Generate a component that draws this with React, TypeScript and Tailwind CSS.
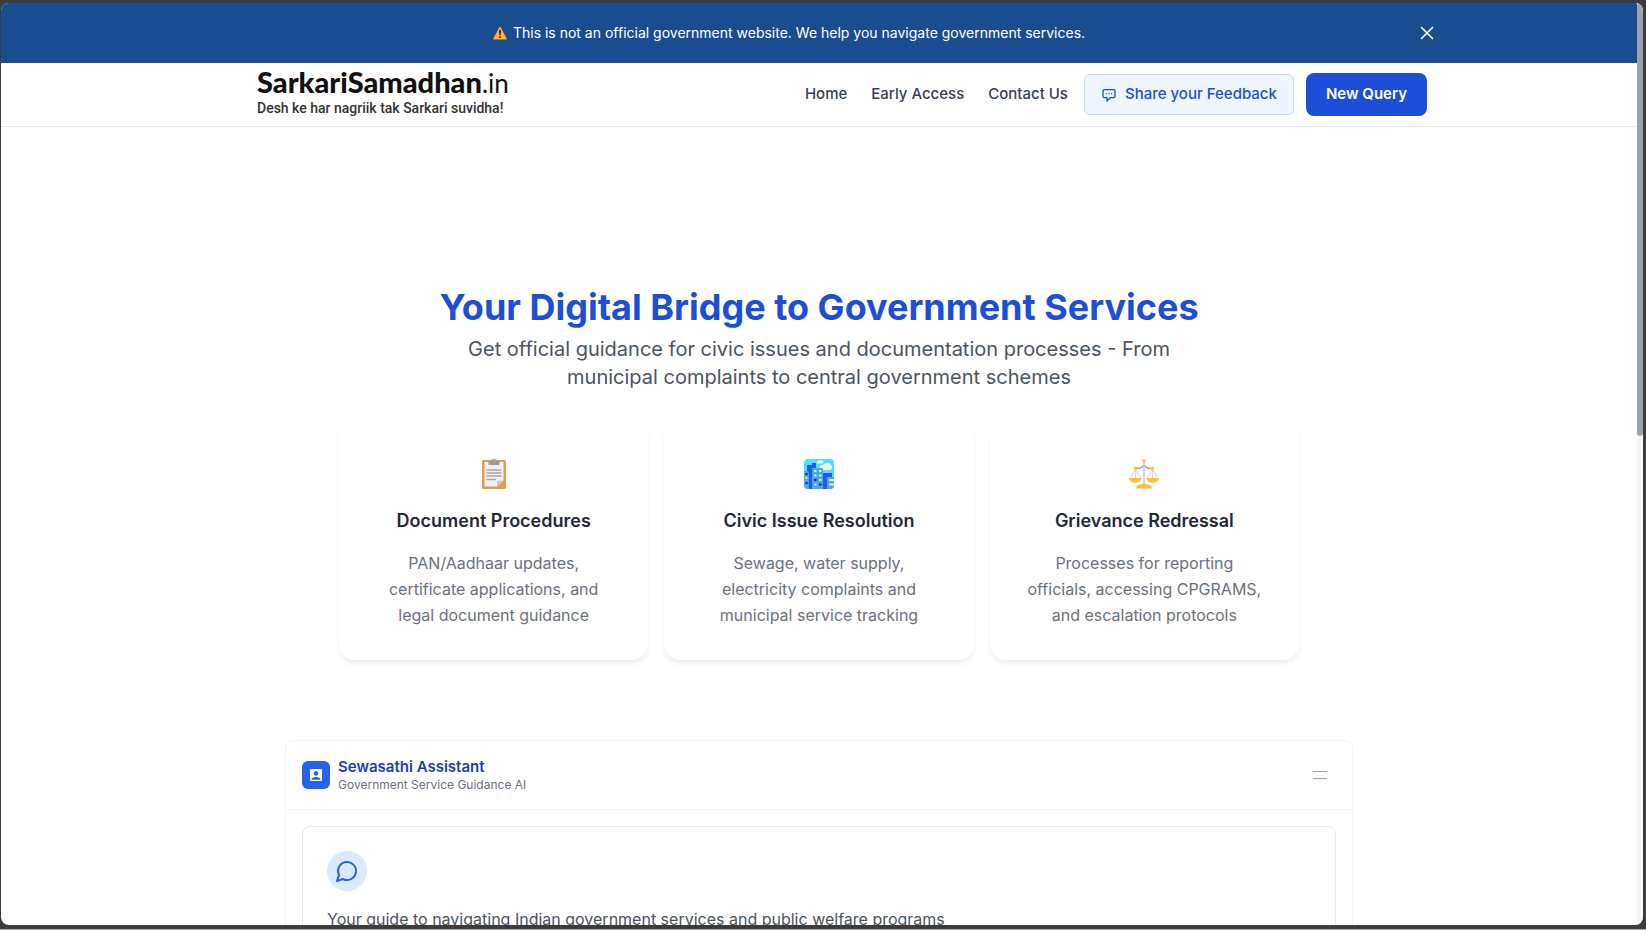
import { useState } from 'react';
import { HiOutlineChatAlt } from 'react-icons/hi';
import { MdAccountBox } from 'react-icons/md';

const WarningIcon = () => (
  <svg viewBox="0 0 32 32" className="size-3.5" aria-hidden="true">
    <path d="M14.4 2.600 1 28A2 2 0 0 0 2.700 31h26.600a2 2 0 0 0 1.700-3L17.600 2.600a1.800 1.800 0 0 0-3.200 0Z" fill="#ffb02e" />
    <path d="M13.800 11a2.200 2.200 0 0 1 4.400 0l-.7 9a1.500 1.500 0 0 1-3 0Z" fill="#321b41" />
    <circle cx="16" cy="25.500" r="2.200" fill="#321b41" />
  </svg>
);

const ClipboardIcon = () => (
  <svg viewBox="0 0 32 32" className="size-8" aria-hidden="true">
    <rect x="4" y="2" width="24" height="29" rx="1.6" fill="#e39d47" />
    <path d="M6.5 4h19v18.5L19 28.5H6.5Z" fill="#f3eef8" />
    <path d="M19 28.5v-5a1 1 0 0 1 1-1h5.5Z" fill="#cdc4d6" />
    <path d="M13 2.5a3 1.500 0 0 1 6 0h1a1.500 1.500 0 0 1 1.500 1.500v3h-11V4A1.500 1.500 0 0 1 12 2.500Z" fill="#9b9b9b" />
    <circle cx="16" cy="3" r="1" fill="#e39d47" />
    <path d="M8.5 12h15M8.5 15h15M8.5 18h15M8.5 21.5H18" stroke="#a6a6a6" strokeWidth="1.3" />
  </svg>
);

const CityIcon = () => (
  <svg viewBox="0 0 32 32" className="size-8" aria-hidden="true">
    <clipPath id="city">
      <rect x="1" y="1" width="30" height="30" rx="4" />
    </clipPath>
    <g clipPath="url(#city)">
      <rect width="32" height="32" fill="#4be2ff" />
      <path d="M14 5.500a1.500 1.500 0 0 1 1-2.500q2-1.500 4-.5a1.500 1.500 0 0 1 0 3Z" fill="#eaf6ff" />
      <path d="M19 12a2.500 2.500 0 0 1 0-5h1a5 4.500 0 0 1 9 1.500A3 3 0 0 1 27 12Z" fill="#f3eef8" />
      <path d="M4 7h5V5h4v5h7v5h9v17H4Z" fill="#1d5fdc" />
      <path d="M0 13h5l1 2v17H0ZM9 10h11v22H9ZM24 19h8v13h-8Z" fill="#42a5ff" />
      <path d="M2.5 19h2v2h-2ZM11 12h2.500v2H11ZM16 12h2.500v2H16ZM11 16.500h2.500v2H11ZM16 16.500h2.500v2H16ZM16 21h2.500v2H16ZM11 25.500h2.500v2H11ZM26 21h6v2h-6ZM26 25.500h6v2h-6Z" fill="#fcee60" />
      <path d="M2.5 15h2v2h-2ZM2.500 24h2v2h-2ZM11 21h2.500v2H11ZM16 25.500h2.500v2H16Z" fill="#321b41" />
    </g>
  </svg>
);

const ScalesIcon = () => (
  <svg viewBox="0 0 32 32" className="size-8" aria-hidden="true">
    <path d="M8 10.500c5 0 7-1 8-4 1 3 3 4 8 4" fill="none" stroke="#9b9b9b" strokeWidth="1.400" />
    <path d="M16 4v22" stroke="#d0d0d0" strokeWidth="1.800" />
    <path d="M7.5 11 2 20.500M7.500 11v9.500M7.500 11 13 20.500M24.500 11 19 20.500M24.500 11v9.500M24.500 11 30 20.500" stroke="#d3d3d3" strokeWidth=".9" />
    <path d="M1 20h12.500a6.200 5 0 0 1-12.500 0ZM18.500 20H31a6.200 5 0 0 1-12.500 0ZM7.500 30.500c1-3 4.500-4.500 8.500-4.500s7.500 1.500 8.500 4.500Z" fill="#f9c23c" />
    <circle cx="16" cy="2.8" r="1.7" fill="#f9c23c" />
    <circle cx="7.5" cy="10.3" r="1.7" fill="#f9c23c" />
    <circle cx="24.5" cy="10.3" r="1.7" fill="#f9c23c" />
  </svg>
);

const services = [
  {
    icon: ClipboardIcon,
    title: 'Document Procedures',
    text: 'PAN/Aadhaar updates, certificate applications, and legal document guidance',
  },
  {
    icon: CityIcon,
    title: 'Civic Issue Resolution',
    text: 'Sewage, water supply, electricity complaints and municipal service tracking',
  },
  {
    icon: ScalesIcon,
    title: 'Grievance Redressal',
    text: 'Processes for reporting officials, accessing CPGRAMS, and escalation protocols',
  },
];

const Banner = ({ onClose }: { onClose: () => void }) => (
  <div className="bg-[#1a4d8f] text-white">
    <div className="mx-auto flex h-[60px] max-w-7xl items-center px-5">
      <p className="flex flex-1 items-center justify-center gap-1.5 text-sm">
        <WarningIcon />
        This is not an official government website. We help you navigate government services.
      </p>
      <button onClick={onClose} className="ml-9" aria-label="Dismiss notice">
        <svg viewBox="0 0 24 24" className="size-6" fill="none" stroke="currentColor" strokeWidth="1.6" strokeLinecap="round">
          <path d="m6.500 17.500 11-11m-11 0 11 11" />
        </svg>
      </button>
    </div>
  </div>
);

const Header = () => (
  <header className="border-b border-gray-200 bg-white">
    <div className="mx-auto flex h-[63px] max-w-7xl items-center justify-between px-8">
      <a href="#" className="pb-2 pl-[46px] text-[#111]">
        <span className="block font-['Lato'] text-[29px] leading-[34px] font-black">
          SarkariSamadhan<span className="text-[26px] font-normal">.in</span>
        </span>
        <span className="block font-['Roboto'] text-sm leading-4 font-medium text-[#333]">
          Desh ke har nagriik tak Sarkari suvidha!
        </span>
      </a>

      <nav className="flex items-center text-[15px] font-medium text-gray-700">
        <div className="mr-4 flex gap-6">
          <a href="#">Home</a>
          <a href="#">Early Access</a>
          <a href="#">Contact Us</a>
        </div>
        <button className="mr-3 flex h-[41px] items-center gap-2 rounded-md border border-blue-200 bg-[#eff6ff] px-4 text-[#1d4ed8]">
          <HiOutlineChatAlt size={16} />
          Share your Feedback
        </button>
        <button className="h-[43px] rounded-lg bg-[#1d4ed8] px-5 font-semibold text-white">New Query</button>
      </nav>
    </div>
  </header>
);

const Hero = () => (
  <section className="mx-auto max-w-[960px] pt-40 text-center">
    <h1 className="text-4xl font-bold text-[#1d4ed8]">Your Digital Bridge to Government Services</h1>
    <p className="mx-auto mt-2 max-w-3xl text-xl text-[#4b5563]">
      Get official guidance for civic issues and documentation processes - From municipal complaints to central
      government schemes
    </p>

    <div className="mt-8 grid grid-cols-3 gap-4">
      {services.map(({ icon: Icon, title, text }) => (
        <div key={title} className="rounded-2xl bg-white p-8 shadow-[0_4px_6px_-1px_rgba(0,0,0,0.08)]">
          <div className="mb-3.5 flex h-[38px] items-center justify-center">
            <Icon />
          </div>
          <h3 className="mb-[15px] text-lg font-semibold text-[#1f2937]">{title}</h3>
          <p className="text-base leading-[26px] text-[#6b7280]">{text}</p>
        </div>
      ))}
    </div>
  </section>
);

const Assistant = () => (
  <section className="mx-auto mt-20 max-w-[1068px] rounded-lg border border-gray-100 bg-white">
    <div className="flex items-center justify-between border-b border-gray-100 p-4">
      <div className="flex items-center gap-2">
        <div className="flex size-7 items-center justify-center rounded-md bg-[#2563eb] text-white">
          <MdAccountBox size={16} />
        </div>
        <div>
          <h2 className="text-[15px] leading-5 font-semibold text-[#1e40af]">Sewasathi Assistant</h2>
          <p className="text-xs text-[#6b7280]">Government Service Guidance AI</p>
        </div>
      </div>
      <button className="p-1.5 text-[#9ca3af]" aria-label="Open menu">
        <svg viewBox="0 0 20 20" className="size-5" fill="none" stroke="currentColor" strokeWidth="1.2">
          <path d="M2.800 6.500h14.400M2.800 13.500h14.400" />
        </svg>
      </button>
    </div>

    <div className="p-4">
      <div className="rounded-lg border border-gray-200 p-6">
        <div className="mb-4 flex size-10 items-center justify-center rounded-full bg-[#dbeafe] text-[#2563eb]">
          <svg viewBox="0 0 24 24" className="size-6" fill="none" stroke="currentColor" strokeWidth="2" strokeLinecap="round" strokeLinejoin="round">
            <path d="M7.9 20A9 9 0 1 0 4 16.1L2 22Z" />
          </svg>
        </div>
        <p className="text-base text-[#4b5563]">
          Your guide to navigating Indian government services and public welfare programs
        </p>
      </div>
    </div>
  </section>
);

const App = () => {
  const [showBanner, setShowBanner] = useState(true);

  return (
    <div className="h-screen border-b border-[#a3a3a3] bg-[#3c3c3c] pt-[3px] pr-[3px] pb-1 pl-px font-['Inter',sans-serif]">
      <div className="flex h-full overflow-hidden rounded-lg bg-white">
        <div className="flex-1 overflow-y-auto [scrollbar-width:none]">
          {showBanner && <Banner onClose={() => setShowBanner(false)} />}
          <Header />
          <main>
            <Hero />
            <Assistant />
          </main>
        </div>

        {/* Scroll track */}
        <div className="w-1.5 bg-gray-100">
          <div className="h-[47%] rounded-full bg-[#9ca3af]" />
        </div>
      </div>
    </div>
  );
};

export default App;
